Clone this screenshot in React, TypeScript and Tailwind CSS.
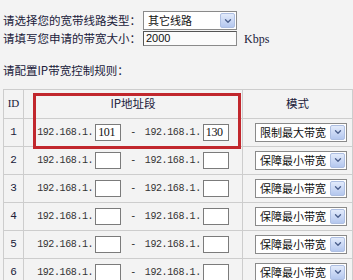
import { ChevronDown } from "lucide-react";

const rows = [
  { id: 1, from: "101", to: "130", mode: "限制最大带宽" },
  { id: 2, from: "", to: "", mode: "保障最小带宽" },
  { id: 3, from: "", to: "", mode: "保障最小带宽" },
  { id: 4, from: "", to: "", mode: "保障最小带宽" },
  { id: 5, from: "", to: "", mode: "保障最小带宽" },
  { id: 6, from: "", to: "", mode: "保障最小带宽" },
];

function Select({ label, className }: { label: string; className: string }) {
  return (
    <div className={`flex h-[19px] items-center border border-[#8a8a8a] bg-white ${className}`}>
      <span className="flex-1 whitespace-nowrap pl-[4px] text-[11px] leading-[17px] text-[#111]">{label}</span>
      <span className="mr-[1px] flex h-[15px] w-[15px] shrink-0 items-center justify-center rounded-[2px] border border-[#aebfe2] bg-gradient-to-b from-[#e3ebfb] to-[#b4c7ee]">
        <ChevronDown size={10} strokeWidth={3.2} color="#4b5f8c" />
      </span>
    </div>
  );
}

function IpBox({ value }: { value: string }) {
  return (
    <span className="inline-flex h-[17px] w-[26px] items-center border border-[#7b7b7b] bg-white pl-[2px] font-['Liberation_Serif',serif] text-[12px] leading-none text-[#111]">
      {value}
    </span>
  );
}

export default function App() {
  return (
    <div className="relative h-[280px] w-[353px] overflow-hidden bg-[#f3f3f3] font-['Noto_Sans_CJK_SC',sans-serif] text-[#20203a]">
      {/* top form */}
      <div className="pl-[3px] pt-[11px]">
        <div className="flex h-[19px] items-center">
          <span className="w-[140px] text-[11.5px] leading-none">请选择您的宽带线路类型：</span>
          <Select label="其它线路" className="w-[94px]" />
        </div>
        <div className="mt-[1px] flex h-[15px] items-center">
          <span className="w-[140px] text-[11.5px] leading-none">请填写您申请的带宽大小：</span>
          <span className="flex h-[15px] w-[94px] items-center border border-[#8a8a8a] border-t-[#555] border-l-[#555] bg-[#fbfbfb] pl-[2px] font-['Liberation_Sans',sans-serif] text-[11px] leading-none text-[#111]">
            2000
          </span>
          <span className="ml-[7px] font-['Liberation_Serif',serif] text-[12px] leading-none">Kbps</span>
        </div>
      </div>

      <div className="mt-[19px] pl-[3px] text-[11.5px] leading-none">请配置IP带宽控制规则：</div>

      {/* rules table */}
      <table className="ml-[3px] mt-[12px] w-[349px] table-fixed border-collapse">
        <colgroup>
          <col className="w-[20px]" />
          <col className="w-[219px]" />
          <col className="w-[110px]" />
        </colgroup>
        <thead>
          <tr className="h-[29px]">
            <th className="border border-[#cdcdcd] text-center font-['Liberation_Serif',serif] text-[11px] font-normal">ID</th>
            <th className="border border-[#cdcdcd] text-center text-[11.5px] font-normal">IP地址段</th>
            <th className="border border-[#cdcdcd] text-center text-[11.5px] font-normal">模式</th>
          </tr>
        </thead>
        <tbody>
          {rows.map((r) => (
            <tr key={r.id} className="h-[28px]">
              <td className="border border-[#cdcdcd] text-center font-['Liberation_Mono',monospace] text-[11px]">{r.id}</td>
              <td className="border border-[#cdcdcd]">
                <div className="flex items-center justify-center font-['Liberation_Mono',monospace] text-[10px] tracking-[-0.4px] text-[#333]">
                  <span className="mr-[2px]">192.168.1.</span>
                  <IpBox value={r.from} />
                  <span className="mx-[9px]">-</span>
                  <span className="mr-[2px]">192.168.1.</span>
                  <IpBox value={r.to} />
                </div>
              </td>
              <td className="border border-[#cdcdcd] pl-[12px]">
                <Select label={r.mode} className="w-[92px]" />
              </td>
            </tr>
          ))}
        </tbody>
      </table>

      {/* red highlight annotation */}
      <div className="pointer-events-none absolute left-[33px] top-[93px] h-[56px] w-[208px] border-[3px] border-[#c1272d]" />
    </div>
  );
}
